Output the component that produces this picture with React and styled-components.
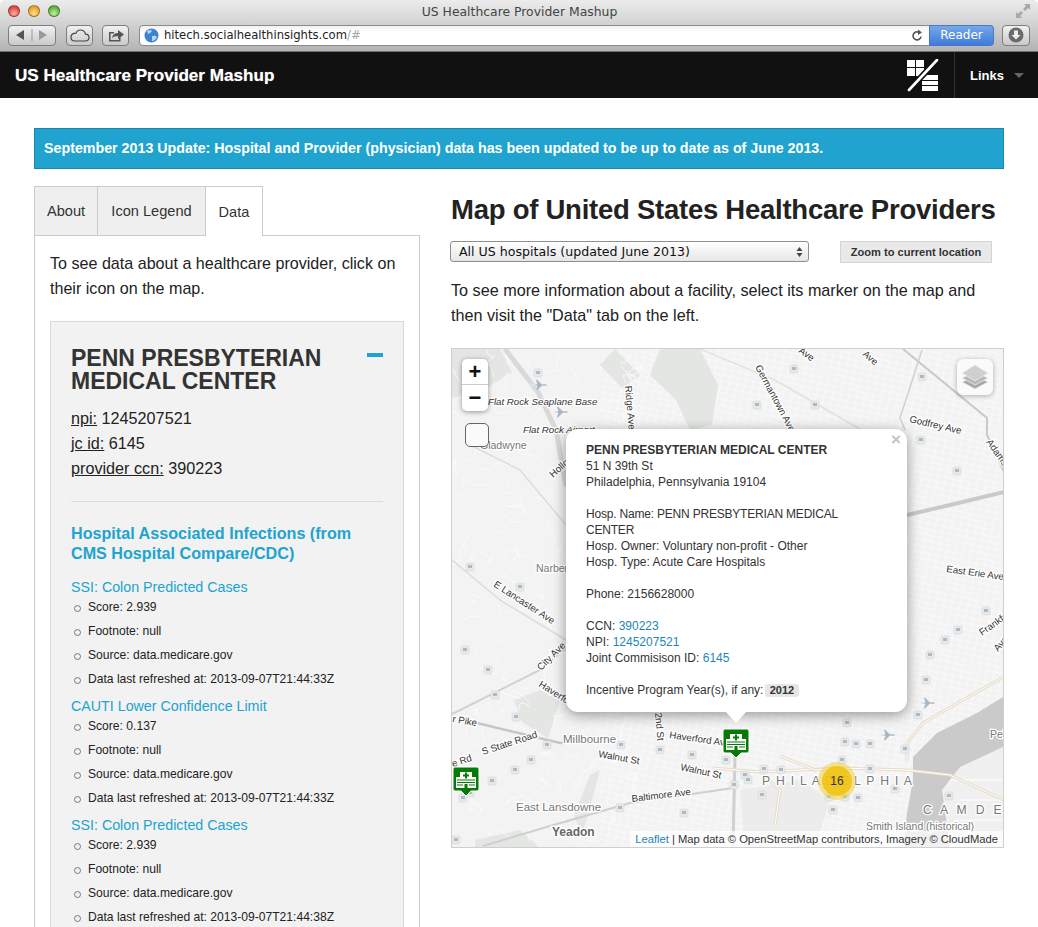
import React from 'react'
import styled, { createGlobalStyle } from 'styled-components'

const GlobalStyle = createGlobalStyle`
  html, body {
    margin: 0;
    height: 927px;
    overflow: hidden;
    background: #fff;
    color: #222;
    font-family: "Liberation Sans", Arial, sans-serif;
  }
  * { box-sizing: border-box; }
`

// ---------- browser window ----------
const Chrome = styled.div`
  height: 52px;
  background: linear-gradient(#ececec, #d6d6d6 40%, #b4b4b4);
  border-bottom: 1px solid #6f6f6f;
  border-radius: 5px 5px 0 0;
`
const TitleBar = styled.div`
  height: 24px;
  padding: 0 7px 2px 8px;
  display: grid;
  grid-template-columns: 1fr auto 1fr;
  align-items: center;
  font: 12.4px "DejaVu Sans", sans-serif;
  color: #444;
`
const Lights = styled.div`
  display: flex;
  gap: 8px;
`
const Light = styled.span`
  width: 12px;
  height: 12px;
  border-radius: 50%;
  border: 1px solid rgba(0, 0, 0, 0.35);
  background: radial-gradient(circle at 50% 75%, ${(p) => p.$light}, ${(p) => p.$color} 70%);
`
const Resize = styled.div`
  justify-self: end;
  display: flex;
`
const Toolbar = styled.div`
  display: flex;
  align-items: center;
  height: 22px;
  padding: 0 8px;
`
const ToolButton = styled.div`
  height: 21px;
  width: ${(p) => p.$w}px;
  margin-right: ${(p) => p.$mr}px;
  display: flex;
  align-items: center;
  justify-content: center;
  border: 1px solid #7e7e7e;
  border-radius: 4px;
  background: linear-gradient(#f1f1f1, #c9c9c9);
`
const UrlBar = styled.div`
  flex: 1;
  height: 21px;
  margin-right: 8px;
  display: flex;
  align-items: center;
  background: linear-gradient(#f2f2f2, #fff 35%);
  border: 1px solid #8a8a8a;
  border-radius: 4px;
  padding-left: 4px;
  font: 11.6px "DejaVu Sans", sans-serif;
  color: #222;
`
const UrlMuted = styled.span`
  color: #a5a5a5;
`
const UrlGap = styled.span`
  flex: 1;
`
const Reader = styled.div`
  width: 65px;
  height: 21px;
  margin: -1px -1px -1px 6px;
  display: flex;
  align-items: center;
  justify-content: center;
  border-radius: 0 4px 4px 0;
  background: linear-gradient(#76a7ea, #3f7bdc);
  border: 1px solid #4a79c4;
  color: #fff;
  font: 12px "DejaVu Sans", sans-serif;
`

// ---------- nav ----------
const Nav = styled.div`
  height: 46px;
  background: #111;
  display: flex;
  align-items: stretch;
  color: #fff;
`
const Brand = styled.div`
  flex: 1;
  padding: 2px 0 0 15px;
  display: flex;
  align-items: center;
  font-size: 17.1px;
  font-weight: bold;
  text-shadow: 0 0 1px rgba(255, 255, 255, 0.6);
`
const Logo = styled.div`
  display: flex;
  align-items: center;
  margin-right: 15px;
`
const NavLinks = styled.div`
  width: 84px;
  border-left: 1px solid #333;
  display: flex;
  align-items: center;
  padding-left: 15px;
  font-size: 13px;
  font-weight: bold;
`
const Caret = styled.span`
  margin-left: 10px;
  margin-top: 1px;
  border: 5px solid transparent;
  border-top: 5px solid #666;
  border-bottom: 0;
`

// ---------- page ----------
const Main = styled.div`
  padding: 30px 34px 0;
`
const Banner = styled.div`
  height: 41px;
  background: #20a4cf;
  border: 1px solid #1e86a8;
  color: #fff;
  font-size: 14.25px;
  font-weight: bold;
  display: flex;
  align-items: center;
  padding: 0 0 1px 9px;
`
const Columns = styled.div`
  display: flex;
  gap: 31px;
  margin-top: 17px;
`
const Left = styled.div`
  width: 386px;
  flex: none;
`
const Right = styled.div`
  width: 553px;
  flex: none;
`
const Tabs = styled.div`
  display: flex;
  height: 50px;
  position: relative;
  z-index: 1;
`
const Tab = styled.div`
  width: ${(p) => p.$w}px;
  display: flex;
  align-items: center;
  justify-content: center;
  font-size: 14.6px;
  color: #333;
  border: 1px solid #cbcbcb;
  margin-left: -1px;
  background: ${(p) => (p.$active ? '#fff' : '#efefef')};
  border-bottom-color: ${(p) => (p.$active ? '#fff' : '#cbcbcb')};
  height: ${(p) => (p.$active ? '51px' : '50px')};
  &:first-child { margin-left: 0; }
`
const Panel = styled.div`
  border: 1px solid #cbcbcb;
  margin-top: -1px;
  padding: 15px 15px 0;
  height: 720px;
`
const Para = styled.p`
  margin: 0;
  font-size: 16.1px;
  line-height: 25px;
  color: #222;
`
const Well = styled.div`
  margin-top: 20px;
  background: #f2f2f2;
  border: 1px solid #d8d8d8;
  padding: 20px;
  height: 700px;
`
const WellHead = styled.div`
  display: flex;
  justify-content: space-between;
`
const WellTitle = styled.h2`
  margin: 5px 0 0;
  font-size: 23px;
  line-height: 23px;
  color: #333;
  font-weight: bold;
`
const Collapse = styled.span`
  width: 16px;
  height: 4px;
  background: #20a4cf;
  margin-top: 11px;
  flex: none;
`
const IdList = styled.div`
  margin-top: 13px;
  padding-bottom: 20px;
  border-bottom: 1px solid #ddd;
  font-size: 16.2px;
  line-height: 25px;
  color: #222;
`
const IdLabel = styled.span`
  text-decoration: underline;
`
const SectionTitle = styled.h3`
  margin: 21px 0 0;
  font-size: 16.15px;
  line-height: 20px;
  color: #20a4cf;
  font-weight: bold;
`
const MeasureName = styled.div`
  margin-top: ${(p) => (p.$first ? '15px' : '6px')};
  font-size: 14.25px;
  line-height: 18px;
  color: #20a4cf;
`
const Facts = styled.ul`
  list-style: none;
  margin: -1px 0 0;
  padding: 0 0 0 17px;
`
const Fact = styled.li`
  position: relative;
  font-size: 12.1px;
  line-height: 24px;
  color: #222;
  &::before {
    content: '';
    position: absolute;
    left: -14px;
    top: 10px;
    width: 5px;
    height: 5px;
    border: 1.5px solid #777;
    border-radius: 50%;
  }
`
const MapTitle = styled.h1`
  margin: 0;
  height: 46px;
  font-size: 27.5px;
  line-height: 48px;
  letter-spacing: -0.25px;
  font-weight: bold;
  color: #222;
  white-space: nowrap;
`
const Controls = styled.div`
  display: flex;
  justify-content: space-between;
  margin: 9px 12px 0 -1px;
  align-items: flex-start;
`
const SelectBox = styled.div`
  width: 359px;
  height: 21px;
  display: flex;
  align-items: center;
  justify-content: space-between;
  padding: 0 5px 0 8px;
  border: 1px solid #8e8e8e;
  border-radius: 3px;
  background: linear-gradient(#fff, #e6e6e6);
  font: 12.6px "DejaVu Sans", sans-serif;
  color: #111;
`
const SmallButton = styled.div`
  width: 152px;
  height: 22px;
  display: flex;
  align-items: center;
  justify-content: center;
  background: #e9e9e9;
  border: 1px solid #d4d4d4;
  font-size: 11.1px;
  font-weight: bold;
  color: #333;
`
const Intro = styled(Para)`
  margin-top: 15px;
  font-size: 16.2px;
  white-space: nowrap;
`

// ---------- map ----------
const MapFrame = styled.div`
  position: relative;
  margin-top: 20px;
  height: 500px;
  border: 1px solid #cfcfcf;
  overflow: hidden;
  background: #f3f3f3;
`
const MapSvg = styled.svg`
  display: block;
`
const Zoom = styled.div`
  position: absolute;
  left: 10px;
  top: 10px;
  width: 26px;
  background: #fff;
  border-radius: 5px;
  box-shadow: 0 1px 5px rgba(0, 0, 0, 0.4);
`
const ZoomBtn = styled.div`
  height: 26px;
  display: flex;
  align-items: center;
  justify-content: center;
  font-size: 22px;
  font-weight: bold;
  color: #111;
  &:first-child { border-bottom: 1px solid #ccc; }
`
const BlankBox = styled.div`
  position: absolute;
  left: 13px;
  top: 74px;
  width: 24px;
  height: 24px;
  background: #fafafa;
  border: 1px solid #666;
  border-radius: 5px;
`
const Layers = styled.div`
  position: absolute;
  right: 10px;
  top: 10px;
  width: 36px;
  height: 36px;
  background: #fafafa;
  border-radius: 6px;
  box-shadow: 0 1px 5px rgba(0, 0, 0, 0.3);
  display: flex;
  align-items: center;
  justify-content: center;
`
const Popup = styled.div`
  position: absolute;
  left: 114px;
  top: 80px;
  width: 341px;
  height: 283px;
  background: #fff;
  border-radius: 12px;
  padding: 13px 20px;
  box-shadow: 0 3px 14px rgba(0, 0, 0, 0.4);
  font-size: 12px;
  line-height: 16px;
  color: #333;
  &::after {
    content: '';
    position: absolute;
    left: 160px;
    bottom: -11px;
    width: 20px;
    height: 11px;
    background: #fff;
    clip-path: polygon(0 0, 100% 0, 50% 100%);
  }
`
const PopupClose = styled.span`
  position: absolute;
  right: 6px;
  top: 2px;
  font-size: 17px;
  font-weight: bold;
  line-height: 18px;
  color: #c3c3c3;
`
const Gap = styled.div`
  height: 16px;
`
const PopupLink = styled.span`
  color: #1f86b5;
`
const CapsLine = styled.div`
  letter-spacing: -0.2px;
`
const YearTag = styled.span`
  display: inline-block;
  margin-left: -2px;
  padding: 0 5px;
  height: 13px;
  line-height: 13px;
  background: #e6e6e6;
  border-radius: 3px;
  font-size: 11px;
  font-weight: bold;
`
const Attribution = styled.div`
  position: absolute;
  right: 0;
  bottom: 0;
  height: 16px;
  padding: 0 5px;
  background: rgba(255, 255, 255, 0.72);
  font-size: 11.2px;
  line-height: 16px;
  color: #333;
  white-space: nowrap;
`

// ---------- map drawing data, page coordinates ----------
const parks = [
  'M452 349L500 349L512 372L480 392L452 398Z',
  'M660 349L700 349L718 385L712 425L690 430L676 400L650 375Z',
  'M514 700L540 690L560 700L548 738L522 722Z',
  'M590 775L600 770L592 800L582 835L574 815Z',
  'M475 840L520 830L540 848L475 848Z',
  'M615 349L640 375L622 388L600 365Z',
]
const highways = [
  { d: 'M505 349L538 392L556 430L566 486', w: 5, c: '#d9d9d9' },
  { d: 'M452 714L540 670L566 648', w: 2, c: '#cfcfcf' },
  { d: 'M473 722L560 743L590 742', w: 2.5, c: '#c6c6c6' },
  { d: 'M907 515L950 505L1004 492', w: 4, c: '#c9c9c9' },
  { d: 'M903 349L987 418L987 435L1004 472', w: 2, c: '#c9c9c9' },
  { d: 'M922 350L900 418L905 430', w: 1.5, c: '#d0d0d0' },
  { d: 'M483 846L550 826L630 803L733 788', w: 2, c: '#cfcfcf' },
  { d: 'M735 756L733 848', w: 3, c: '#cfcfcf' },
  { d: 'M452 560L500 600L566 640', w: 1.5, c: '#dcdcdc' },
  { d: 'M470 445L520 470L566 525', w: 1.5, c: '#dcdcdc' },
  { d: 'M700 349L775 380L860 429', w: 1.5, c: '#e2e2e2' },
]
const tanRoads = [
  'M907 770L950 775L1004 800',
  'M907 762L907 743L923 723L963 700L1004 677',
  'M712 768L760 772L840 768L907 770',
  'M760 772L780 790L775 825',
  'M780 756L815 770L840 768',
]
const pois = [
  [538, 373], [470, 567], [520, 587], [465, 650], [488, 670], [495, 695], [516, 717], [547, 745],
  [531, 760], [515, 770], [492, 781], [463, 798], [470, 793], [621, 745], [660, 750], [692, 755],
  [726, 760], [745, 775], [620, 808], [684, 813], [748, 780], [734, 785], [456, 840],
  [922, 377], [794, 369], [757, 405], [815, 405], [963, 372], [921, 440], [957, 471],
  [986, 611], [958, 630], [945, 640], [930, 655], [926, 680], [918, 715], [847, 723], [845, 742],
  [856, 744], [870, 744], [905, 749], [842, 760], [870, 769], [764, 769], [781, 770], [762, 795],
  [829, 797], [845, 797], [858, 798], [833, 810], [895, 789], [949, 796],
]
const planes = [[539, 385], [560, 412], [927, 703], [887, 735]]
const labels = [
  { t: 'Flat Rock Seaplane Base', x: 488, y: 405, i: 1 },
  { t: 'Flat Rock Airport', x: 523, y: 433, i: 1 },
  { t: 'Gladwyne', x: 480, y: 449, c: '#777', s: 10.5 },
  { t: 'Ridge Ave', x: 625, y: 386, r: 85 },
  { t: 'Hollow Rd', x: 553, y: 478, r: -42 },
  { t: 'Narberth', x: 536, y: 572, c: '#777', s: 10.5 },
  { t: 'E Lancaster Ave', x: 493, y: 586, r: 33 },
  { t: 'Germantown Ave', x: 755, y: 367, r: 62 },
  { t: 'Ave', x: 798, y: 352, r: 35 },
  { t: 'Ave', x: 862, y: 355, r: 40 },
  { t: 'Godfrey Ave', x: 909, y: 422, r: 13 },
  { t: 'Adams Ave', x: 986, y: 442, r: 55 },
  { t: 'East Erie Avenue', x: 946, y: 572, r: 8 },
  { t: 'Frankford', x: 982, y: 636, r: -35 },
  { t: 'Ave', x: 998, y: 652, r: -50 },
  { t: 'City Ave', x: 541, y: 671, r: -45 },
  { t: 'Haverford', x: 538, y: 686, r: 32 },
  { t: 'r Pike', x: 452, y: 722, r: 10 },
  { t: 'S State Road', x: 483, y: 755, r: -18 },
  { t: 'e Rd', x: 453, y: 767, r: -18 },
  { t: 'Millbourne', x: 563, y: 743, c: '#777', s: 11.5 },
  { t: 'Walnut St', x: 598, y: 757, r: 10 },
  { t: 'Walnut St', x: 680, y: 770, r: 12 },
  { t: 'Haverford Ave', x: 669, y: 738, r: 8 },
  { t: '2nd St', x: 655, y: 713, r: 85 },
  { t: 'Baltimore Ave', x: 632, y: 802, r: -7 },
  { t: 'East Lansdowne', x: 516, y: 811, c: '#777', s: 11.5 },
  { t: 'Yeadon', x: 552, y: 836, c: '#666', s: 12, b: 1 },
  { t: 'P H I L A D E L P H I A', x: 762, y: 785, c: '#777', s: 12.2, ls: 1.3 },
  { t: 'C A M D E N', x: 923, y: 814, c: '#777', s: 12.2, ls: 2.8 },
  { t: 'Smith Island (historical)', x: 866, y: 830, c: '#777', s: 10.4 },
  { t: 'Pel', x: 990, y: 738, c: '#777', s: 10.5 },
]

// seeded so the little streets stay the same on every run
const makeStreets = () => {
  let seed = 7
  const rnd = () => {
    seed = (seed * 16807) % 2147483647
    return seed / 2147483647
  }
  const out = []
  for (let i = 0; i < 260; i++) {
    const x = 452 + rnd() * 190
    const y = 349 + rnd() * 500
    const a = rnd() * 24 - 12
    const b = rnd() * 24 - 12
    out.push(`M${x} ${y}q${a} ${b} ${a + rnd() * 24 - 12} ${b + rnd() * 24 - 12}`)
  }
  return out.join('')
}
const streets = makeStreets()

const Poi = ({ x, y }) => (
  <g transform={`translate(${x - 4} ${y - 4})`}>
    <rect width="8" height="8" rx="1.5" fill="#e6e9ec" stroke="#d4d8dc" strokeWidth="0.6" />
    <rect x="2" y="2" width="4" height="3" fill="#b0b8c0" />
  </g>
)

const Plane = ({ x, y }) => (
  <path
    transform={`translate(${x} ${y}) scale(0.9)`}
    d="M-9 0L-2 -1L-4 -6L-2 -6L3 -1L8 -1Q10 0 8 1L3 1L-2 6L-4 6L-2 1L-9 0Z"
    fill="#a8b6c4"
    stroke="#fff"
    strokeWidth="0.5"
  />
)

const Hospital = ({ x, y }) => (
  <g transform={`translate(${x} ${y})`}>
    <path
      d="M2 0H24Q26 0 26 2V22Q26 24 24 24H18L13 29L8 24H2Q0 24 0 22V2Q0 0 2 0Z"
      fill="#067a06"
      stroke="#fff"
      strokeWidth="1"
    />
    <path d="M7 10V5H19V10H23V21H3V10Z" fill="#fff" />
    <path d="M12 5.5H14V7.5H16V9.5H14V11.5H12V9.5H10V7.5H12Z" fill="#067a06" />
    <path d="M4 13H22M4 15.5H22M4 18H10M16 18H22" stroke="#067a06" strokeWidth="1" />
    <rect x="11.5" y="17" width="3" height="4" fill="#067a06" />
  </g>
)

const MapDrawing = () => (
  <MapSvg width="551" height="498" viewBox="452 349 551 498">
    <defs>
      <pattern id="grid" width="8" height="6" patternUnits="userSpaceOnUse" patternTransform="rotate(12)">
        <path d="M0 0H8M0 0V6" stroke="#fff" strokeWidth="0.8" fill="none" />
      </pattern>
    </defs>
    <rect x="452" y="349" width="551" height="498" fill="#f3f3f3" />
    <rect x="600" y="349" width="403" height="498" fill="url(#grid)" />
    {parks.map((d) => (
      <path key={d} d={d} fill="#e4e6e4" />
    ))}
    <path d={streets} stroke="#fcfcfc" strokeWidth="0.8" fill="none" />
    <path d="M1003 697L977 713L937 733L913 757L913 780L907 813L903 848L1003 848Z" fill="#cacaca" />
    <path d="M1003 747L960 767L942 790L950 848L1003 848Z" fill="#f0f0f0" />
    <path d="M950 780H1003M960 800H1003M955 820H1003" stroke="#fff" strokeWidth="1" />
    <path d="M740 790L800 780L830 800L815 848L745 848Z" fill="#ececec" />
    {highways.map((h) => (
      <path key={h.d} d={h.d} stroke={h.c} strokeWidth={h.w} fill="none" />
    ))}
    {tanRoads.map((d) => (
      <g key={d} fill="none">
        <path d={d} stroke="#e6dcc8" strokeWidth="3" />
        <path d={d} stroke="#fff" strokeWidth="1" />
      </g>
    ))}
    {pois.map(([x, y]) => (
      <Poi key={`${x}-${y}`} x={x} y={y} />
    ))}
    {planes.map(([x, y]) => (
      <Plane key={`${x}-${y}`} x={x} y={y} />
    ))}
    {labels.map((l) => (
      <text
        key={l.t + l.x}
        x={l.x}
        y={l.y}
        transform={l.r ? `rotate(${l.r} ${l.x} ${l.y})` : undefined}
        fontFamily="Liberation Sans, sans-serif"
        fontSize={l.s || 9.7}
        fontStyle={l.i ? 'italic' : 'normal'}
        fontWeight={l.b ? 'bold' : 'normal'}
        letterSpacing={l.ls || 0}
        fill={l.c || '#333'}
        stroke="#fff"
        strokeWidth="2.5"
        paintOrder="stroke"
      >
        {l.t}
      </text>
    ))}
    <circle cx="837" cy="781" r="19" fill="#f1d357" fillOpacity="0.6" />
    <circle cx="837" cy="781" r="15" fill="#f0c20c" fillOpacity="0.85" />
    <text x="837" y="785" textAnchor="middle" fontFamily="Liberation Sans, sans-serif" fontSize="12" fill="#333">
      16
    </text>
    <Hospital x={723} y={729} />
    <Hospital x={453} y={767} />
  </MapSvg>
)

const measures = [
  { name: 'SSI: Colon Predicted Cases', score: '2.939', at: '2013-09-07T21:44:33Z' },
  { name: 'CAUTI Lower Confidence Limit', score: '0.137', at: '2013-09-07T21:44:33Z' },
  { name: 'SSI: Colon Predicted Cases', score: '2.939', at: '2013-09-07T21:44:38Z' },
]

export default function App() {
  return (
    <>
      <GlobalStyle />
      <Chrome>
        <TitleBar>
          <Lights>
            <Light $color="#e2463f" $light="#ffb0a8" />
            <Light $color="#e9a228" $light="#ffe08a" />
            <Light $color="#5cb23c" $light="#c4f0a0" />
          </Lights>
          <span>US Healthcare Provider Mashup</span>
          <Resize>
            <svg width="16" height="16" viewBox="0 0 16 16">
              <path d="M9 1H15V7L13 5L10 8L8 6L11 3ZM1 15V9L3 11L6 8L8 10L5 13L7 15Z" fill="#a8a8a8" />
            </svg>
          </Resize>
        </TitleBar>
        <Toolbar>
          <ToolButton $w={48} $mr={10}>
            <svg width="36" height="12" viewBox="0 0 36 12">
              <path d="M2 6L10 1V11Z" fill="#555" />
              <path d="M18 0V12" stroke="#999" />
              <path d="M33 6L25 1V11Z" fill="#999" />
            </svg>
          </ToolButton>
          <ToolButton $w={27} $mr={9}>
            <svg width="20" height="13" viewBox="0 0 20 13">
              <path
                d="M5 12H15Q19 12 19 8.5Q19 5.5 15.5 5.2Q14.5 1 10.5 1Q7 1 6 4.2Q1 4.4 1 8.2Q1 12 5 12Z"
                fill="none"
                stroke="#444"
                strokeWidth="1.2"
              />
            </svg>
          </ToolButton>
          <ToolButton $w={27} $mr={10}>
            <svg width="18" height="14" viewBox="0 0 18 14">
              <path d="M2 4H7V5.5H3.5V12H12V9H13.5V13.5H2Z" fill="#555" />
              <path d="M5 10Q6 5 11 5V2L17 6.5L11 11V8Q7 8 5 10Z" fill="#555" />
            </svg>
          </ToolButton>
          <UrlBar>
            <svg width="15" height="15" viewBox="0 0 15 15" style={{ marginRight: 5 }}>
              <circle cx="7.5" cy="7.5" r="7" fill="#3d82d6" />
              <path d="M3 3Q6 1 8 3Q6 6 4 6ZM8 8Q12 7 13 9Q11 13 8 13Z" fill="#bcd6f0" />
            </svg>
            hitech.socialhealthinsights.com<UrlMuted>/#</UrlMuted>
            <UrlGap />
            <svg width="12" height="13" viewBox="0 0 12 13">
              <path d="M10 7.5A4 4 0 1 1 8 3.4" fill="none" stroke="#555" strokeWidth="1.6" />
              <path d="M7 0.5L11 3.5L7 6Z" fill="#555" />
            </svg>
            <Reader>Reader</Reader>
          </UrlBar>
          <ToolButton $w={28} $mr={0}>
            <svg width="16" height="16" viewBox="0 0 16 16">
              <circle cx="8" cy="8" r="7.5" fill="#6b6b6b" />
              <path d="M6 3.5H10V8H12.5L8 12.5L3.5 8H6Z" fill="#eee" />
            </svg>
          </ToolButton>
        </Toolbar>
      </Chrome>

      <Nav>
        <Brand>US Healthcare Provider Mashup</Brand>
        <Logo>
          <svg width="33" height="33" viewBox="0 0 33 33">
            <path d="M1 1H9V8H1ZM10 1H18V8H10ZM1 9H9V17H1ZM10 9H18V17H10Z" fill="#fff" />
            <path d="M16 16H32V21H16ZM16 22H32V26H16ZM16 27H32V32H16Z" fill="#fff" />
            <path d="M31 1L3 31" stroke="#111" strokeWidth="6" />
            <path d="M31 1L3 31" stroke="#fff" strokeWidth="2.6" strokeLinecap="round" />
          </svg>
        </Logo>
        <NavLinks>
          Links
          <Caret />
        </NavLinks>
      </Nav>

      <Main>
        <Banner>September 2013 Update: Hospital and Provider (physician) data has been updated to be up to date as of June 2013.</Banner>
        <Columns>
          <Left>
            <Tabs>
              <Tab $w={64}>About</Tab>
              <Tab $w={109}>Icon Legend</Tab>
              <Tab $w={58} $active>
                Data
              </Tab>
            </Tabs>
            <Panel>
              <Para>To see data about a healthcare provider, click on their icon on the map.</Para>
              <Well>
                <WellHead>
                  <WellTitle>
                    PENN PRESBYTERIAN
                    <br />
                    MEDICAL CENTER
                  </WellTitle>
                  <Collapse />
                </WellHead>
                <IdList>
                  <div>
                    <IdLabel>npi:</IdLabel> 1245207521
                  </div>
                  <div>
                    <IdLabel>jc id:</IdLabel> 6145
                  </div>
                  <div>
                    <IdLabel>provider ccn:</IdLabel> 390223
                  </div>
                </IdList>
                <SectionTitle>Hospital Associated Infections (from CMS Hospital Compare/CDC)</SectionTitle>
                {measures.map((m, i) => (
                  <div key={i}>
                    <MeasureName $first={i === 0}>{m.name}</MeasureName>
                    <Facts>
                      <Fact>Score: {m.score}</Fact>
                      <Fact>Footnote: null</Fact>
                      <Fact>Source: data.medicare.gov</Fact>
                      <Fact>Data last refreshed at: {m.at}</Fact>
                    </Facts>
                  </div>
                ))}
              </Well>
            </Panel>
          </Left>
          <Right>
            <MapTitle>Map of United States Healthcare Providers</MapTitle>
            <Controls>
              <SelectBox>
                All US hospitals (updated June 2013)
                <svg width="7" height="12" viewBox="0 0 7 12">
                  <path d="M3.5 1L6.5 5H0.5ZM3.5 11L0.5 7H6.5Z" fill="#444" />
                </svg>
              </SelectBox>
              <SmallButton>Zoom to current location</SmallButton>
            </Controls>
            <Intro>
              To see more information about a facility, select its marker on the map and
              <br />
              then visit the "Data" tab on the left.
            </Intro>
            <MapFrame>
              <MapDrawing />
              <Zoom>
                <ZoomBtn>+</ZoomBtn>
                <ZoomBtn>−</ZoomBtn>
              </Zoom>
              <BlankBox />
              <Layers>
                <svg width="28" height="28" viewBox="0 0 28 28">
                  <path d="M14 13L27 19L14 26L1 19Z" fill="#a8a8a8" stroke="#eee" strokeWidth="0.8" />
                  <path d="M14 9L27 15L14 22L1 15Z" fill="#b8b8b8" stroke="#eee" strokeWidth="0.8" />
                  <path d="M14 2L27 10L14 18L1 10Z" fill="#cfcfcf" stroke="#eee" strokeWidth="0.8" />
                </svg>
              </Layers>
              <Popup>
                <PopupClose>×</PopupClose>
                <strong>PENN PRESBYTERIAN MEDICAL CENTER</strong>
                <div>51 N 39th St</div>
                <div>Philadelphia, Pennsylvania 19104</div>
                <Gap />
                <CapsLine>
                  Hosp. Name: PENN PRESBYTERIAN MEDICAL
                  <br />
                  CENTER
                </CapsLine>
                <div>Hosp. Owner: Voluntary non-profit - Other</div>
                <div>Hosp. Type: Acute Care Hospitals</div>
                <Gap />
                <div>Phone: 2156628000</div>
                <Gap />
                <div>
                  CCN: <PopupLink>390223</PopupLink>
                </div>
                <div>
                  NPI: <PopupLink>1245207521</PopupLink>
                </div>
                <div>
                  Joint Commisison ID: <PopupLink>6145</PopupLink>
                </div>
                <Gap />
                <div>
                  Incentive Program Year(s), if any: <YearTag>2012</YearTag>
                </div>
              </Popup>
              <Attribution>
                <PopupLink>Leaflet</PopupLink> | Map data © OpenStreetMap contributors, Imagery © CloudMade
              </Attribution>
            </MapFrame>
          </Right>
        </Columns>
      </Main>
    </>
  )
}
